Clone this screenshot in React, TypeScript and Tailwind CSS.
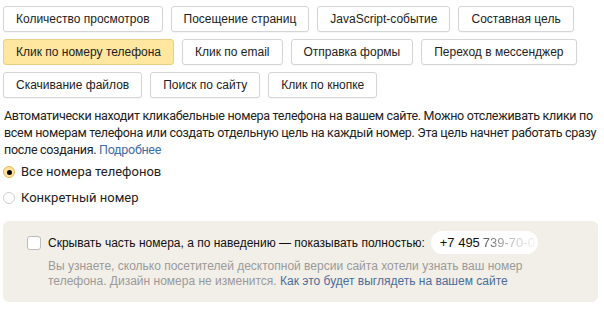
import React from 'react';

const rows: { label: string; active?: boolean }[][] = [
  [
    { label: 'Количество просмотров' },
    { label: 'Посещение страниц' },
    { label: 'JavaScript-событие' },
    { label: 'Составная цель' },
  ],
  [
    { label: 'Клик по номеру телефона', active: true },
    { label: 'Клик по email' },
    { label: 'Отправка формы' },
    { label: 'Переход в мессенджер' },
  ],
  [{ label: 'Скачивание файлов' }, { label: 'Поиск по сайту' }, { label: 'Клик по кнопке' }],
];

function GoalButton({ label, active }: { label: string; active?: boolean }) {
  return (
    <button
      className={
        active
          ? "shrink-0 whitespace-nowrap h-[26px] px-[12px] rounded-[3px] border border-[#e8cf86] bg-[#ffe7a0] text-[12px] text-[#222] font-['Liberation_Sans',Arial,sans-serif]"
          : "shrink-0 whitespace-nowrap h-[26px] px-[12px] rounded-[3px] border border-[#d5d5d5] bg-white text-[12px] text-[#222] font-['Liberation_Sans',Arial,sans-serif] shadow-[0_1px_1px_rgba(0,0,0,0.04)]"
      }
    >
      {label}
    </button>
  );
}

export default function App() {
  return (
    <div className="w-[604px] h-[309px] bg-white px-[3px] pt-[6px] text-[#222] font-['Roboto',sans-serif] overflow-hidden">
      {/* goal type buttons */}
      <div className="flex flex-col gap-[7px]">
        {rows.map((row, i) => (
          <div key={i} className="flex gap-[8px]">
            {row.map((b) => (
              <GoalButton key={b.label} label={b.label} active={b.active} />
            ))}
          </div>
        ))}
      </div>

      <p className="mt-[9px] pl-[1px] whitespace-nowrap text-[12.5px] leading-[17px] tracking-[-0.3px]">
        Автоматически находит кликабельные номера телефона на вашем сайте. Можно отслеживать клики по
        <br />
        всем номерам телефона или создать отдельную цель на каждый номер. Эта цель начнет работать сразу
        <br />
        после создания. <a className="text-[#3f6ea8]">Подробнее</a>
      </p>

      {/* radio group */}
      <div className="mt-[6px] flex flex-col gap-[10px] text-[13px]">
        <label className="flex items-center gap-[6px] h-[16px]">
          <span className="w-[12px] h-[12px] rounded-full border border-[#e0b75a] bg-[#ffe39a] flex items-center justify-center">
            <span className="w-[5px] h-[5px] rounded-full bg-black" />
          </span>
          Все номера телефонов
        </label>
        <label className="flex items-center gap-[6px] h-[16px]">
          <span className="w-[12px] h-[12px] rounded-full border border-[#cfcfcf] bg-white" />
          Конкретный номер
        </label>
      </div>

      {/* hide number panel */}
      <div className="mt-[15px] mr-[3px] rounded-[6px] bg-[#f2efe8] pl-[24px] pr-4 pt-[10px] pb-[13px] font-['Liberation_Sans',Arial,sans-serif]">
        <div className="flex items-center gap-[7px]">
          <span className="w-[14px] h-[14px] rounded-[3px] border border-[#bdbdbd] bg-white" />
          <span className="text-[12px] text-[#111]">Скрывать часть номера, а по наведению — показывать полностью:</span>
          <span className="ml-[-1px] h-[23px] w-[107px] rounded-full bg-white flex items-center pl-[9px] text-[13px] overflow-hidden whitespace-nowrap">
            <span className="text-[#111]">+7 495</span>
            <span className="ml-[3px] bg-gradient-to-r from-[#555] via-[#bbb] to-[#f2f2f2] bg-clip-text text-transparent">
              739-70-0
            </span>
          </span>
        </div>
        <p className="mt-[5px] pl-[21px] text-[12px] leading-[15px] text-[#9a9a9a]">
          Вы узнаете, сколько посетителей десктопной версии сайта хотели узнать ваш номер
          <br />
          телефона. Дизайн номера не изменится.{' '}
          <a className="text-[#4b6d9b]">Как это будет выглядеть на вашем сайте</a>
        </p>
      </div>
    </div>
  );
}
